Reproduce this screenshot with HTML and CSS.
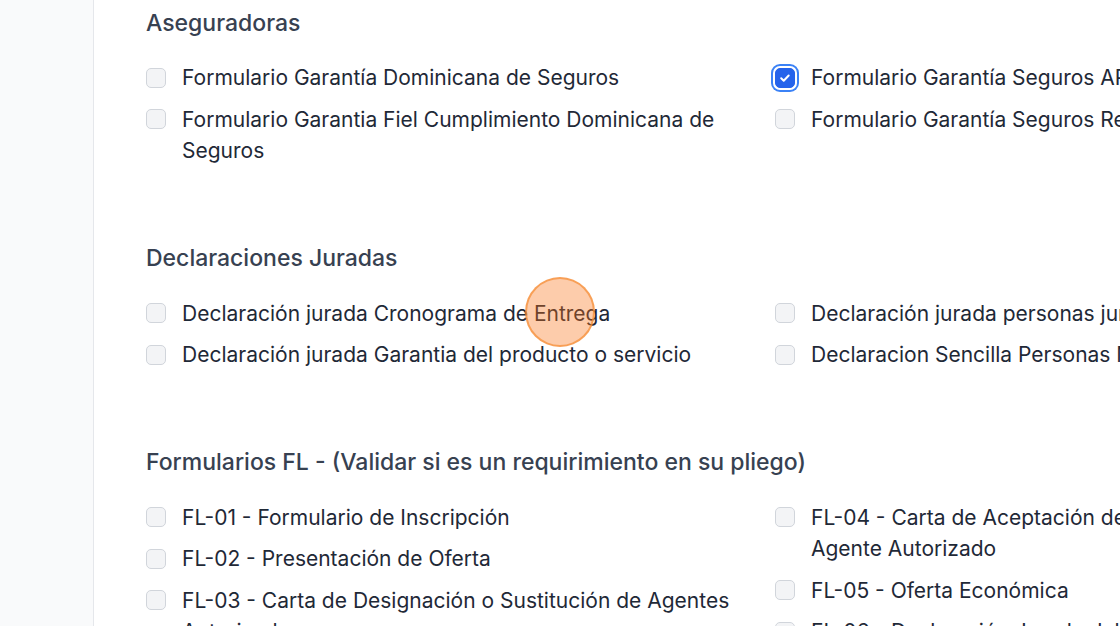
FILE: index.html
```html
<!DOCTYPE html>
<html lang="es">
<head>
<meta charset="utf-8">
<title>Formularios</title>
<link rel="stylesheet" href="styles.css">
</head>
<body>
<div class="layout">
  <aside class="sidebar"></aside>
  <main class="main">
    <section class="group">
      <h2 class="group-title">Aseguradoras</h2>
      <div class="options">
        <label class="option"><span class="box"></span><span class="text">Formulario Garantía Dominicana de Seguros</span></label>
        <label class="option"><span class="box checked"><svg viewBox="0 0 16 16" width="16" height="16"><path d="M4.2 8.3l2.5 2.4 5-5.2" fill="none" stroke="#fff" stroke-width="2" stroke-linecap="round" stroke-linejoin="round"/></svg></span><span class="text">Formulario Garantía Seguros APS</span></label>
        <label class="option"><span class="box"></span><span class="text">Formulario Garantia Fiel Cumplimiento Dominicana de Seguros</span></label>
        <label class="option"><span class="box"></span><span class="text">Formulario Garantía Seguros Reservas</span></label>
      </div>
    </section>
    <section class="group">
      <h2 class="group-title">Declaraciones Juradas</h2>
      <div class="options">
        <label class="option"><span class="box"></span><span class="text">Declaración jurada Cronograma de Entrega</span></label>
        <label class="option"><span class="box"></span><span class="text">Declaración jurada personas jurídicas</span></label>
        <label class="option"><span class="box"></span><span class="text">Declaración jurada Garantia del producto o servicio</span></label>
        <label class="option"><span class="box"></span><span class="text">Declaracion Sencilla Personas Morales</span></label>
      </div>
    </section>
    <section class="group">
      <h2 class="group-title">Formularios FL - (Validar si es un requirimiento en su pliego)</h2>
      <div class="options cols">
        <div class="col">
          <label class="option"><span class="box"></span><span class="text">FL-01 - Formulario de Inscripción</span></label>
          <label class="option"><span class="box"></span><span class="text">FL-02 - Presentación de Oferta</span></label>
          <label class="option"><span class="box"></span><span class="text">FL-03 - Carta de Designación o Sustitución de Agentes Autorizados</span></label>
        </div>
        <div class="col">
          <label class="option"><span class="box"></span><span class="text">FL-04 - Carta de Aceptación de Designación como Agente Autorizado</span></label>
          <label class="option"><span class="box"></span><span class="text">FL-05 - Oferta Económica</span></label>
          <label class="option"><span class="box"></span><span class="text">FL-06 - Declaración Jurada del Oferente</span></label>
        </div>
      </div>
    </section>
  </main>
</div>
<div class="click-marker"></div>
</body>
</html>
```

FILE: styles.css
```css
html, body {
  margin: 0;
  padding: 0;
  height: 100%;
  overflow: hidden;
  background: #ffffff;
  font-family: Inter, "Noto Sans", "Liberation Sans", sans-serif;
  color: #1f2937;
}

.layout {
  display: flex;
  height: 626px;
}

.sidebar {
  flex: 0 0 93px;
  background: #f9fafb;
  border-right: 1px solid #e5e7eb;
}

.main {
  flex: 0 0 1300px;
  padding: 9px 0 0 52px;
  box-sizing: border-box;
}

.group {
  margin-bottom: 77px;
}

.group-title {
  margin: 0 0 25px;
  font-size: 23px;
  line-height: 29px;
  font-weight: 500;
  color: #374151;
}

.group:first-child .group-title {
  margin-bottom: 24px;
}

.options {
  display: grid;
  grid-template-columns: 589px 589px;
  column-gap: 40px;
  row-gap: 10px;
}

.options.cols {
  align-items: start;
}

.col {
  display: flex;
  flex-direction: column;
  gap: 10px;
}

.option {
  display: flex;
  align-items: flex-start;
  gap: 16px;
  font-size: 21px;
  line-height: 31.5px;
  color: #1f2937;
}

.box {
  flex: 0 0 auto;
  width: 20px;
  height: 20px;
  margin-top: 5.75px;
  box-sizing: border-box;
  border: 1px solid #d1d5db;
  border-radius: 5px;
  background: #f3f4f6;
  display: flex;
  align-items: center;
  justify-content: center;
}

.box.checked {
  background: #2563eb;
  border-color: #2563eb;
  box-shadow: 0 0 0 2px #ffffff, 0 0 0 4px #3b82f6;
}

.text {
  display: block;
}

.click-marker {
  position: absolute;
  left: 525px;
  top: 277px;
  width: 70px;
  height: 70px;
  box-sizing: border-box;
  border-radius: 50%;
  background: rgba(249, 115, 22, 0.36);
  border: 2.5px solid rgba(245, 140, 50, 0.7);
}
```
